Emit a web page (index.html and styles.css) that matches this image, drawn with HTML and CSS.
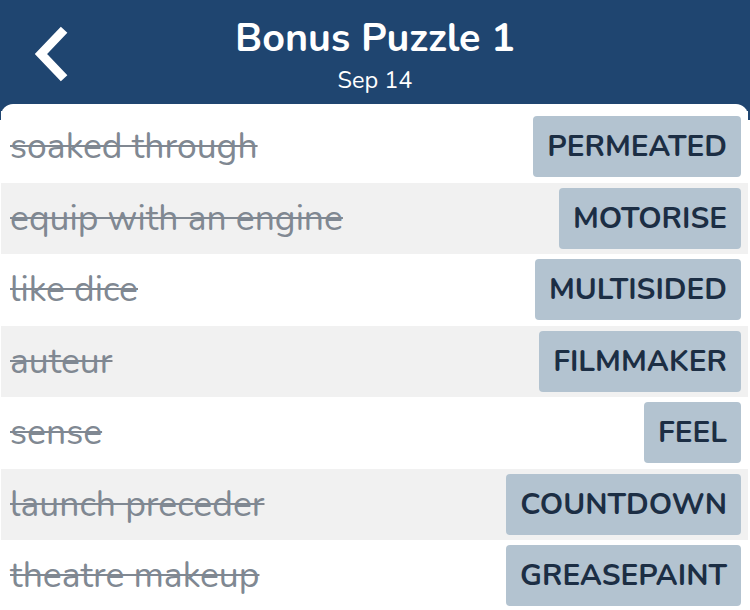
FILE: index.html
```html
<!DOCTYPE html>
<html>
<head>
<meta charset="utf-8">
<link rel="stylesheet" href="styles.css">
</head>
<body>
<div class="page">
  <header class="header">
    <a class="back" aria-label="Back">
      <svg width="40" height="56" viewBox="0 0 40 56"><path d="M29 7 L9 28 L29 49" fill="none" stroke="#fff" stroke-width="9" stroke-linecap="square" stroke-linejoin="miter"/></svg>
    </a>
    <div class="titles">
      <div class="title">Bonus Puzzle 1</div>
      <div class="subtitle">Sep 14</div>
    </div>
  </header>
  <main class="card">
    <div class="row"><span class="clue">soaked through</span><span class="answer">PERMEATED</span></div>
    <div class="row alt"><span class="clue">equip with an engine</span><span class="answer">MOTORISE</span></div>
    <div class="row"><span class="clue">like dice</span><span class="answer">MULTISIDED</span></div>
    <div class="row alt"><span class="clue">auteur</span><span class="answer">FILMMAKER</span></div>
    <div class="row"><span class="clue">sense</span><span class="answer">FEEL</span></div>
    <div class="row alt"><span class="clue">launch preceder</span><span class="answer">COUNTDOWN</span></div>
    <div class="row"><span class="clue">theatre makeup</span><span class="answer">GREASEPAINT</span></div>
  </main>
</div>
</body>
</html>
```
FILE: styles.css
```css
html, body {
  margin: 0;
  padding: 0;
  background: #fff;
  font-family: "Nunito", "Lato", "Open Sans", sans-serif;
}
.page {
  width: 750px;
  height: 610px;
  overflow: hidden;
  background: linear-gradient(#1f4570 0, #1f4570 120px, #fff 120px);
}
.header {
  height: 104px;
  box-sizing: border-box;
  padding-top: 16px;
  position: relative;
  color: #fff;
}
.back {
  position: absolute;
  left: 32px;
  top: 26px;
  display: block;
  line-height: 0;
}
.titles {
  display: flex;
  flex-direction: column;
  align-items: center;
}
.title {
  font-size: 39.5px;
  font-weight: 700;
  line-height: 44px;
}
.subtitle {
  font-size: 23.5px;
  line-height: 28px;
  margin-top: 6px;
}
.card {
  width: 747px;
  margin-left: 1px;
  background: #fff;
  border-radius: 12px 12px 0 0;
  padding-top: 7px;
}
.row {
  height: 71.5px;
  display: flex;
  align-items: center;
  justify-content: space-between;
  padding: 0 7px 0 9px;
  box-sizing: border-box;
  background: #fff;
}
.row.alt {
  background: #f1f1f1;
}
.clue {
  font-size: 35.5px;
  color: #808892;
  text-decoration: line-through;
  text-decoration-thickness: 2px;
  white-space: nowrap;
}
.answer {
  height: 61px;
  display: flex;
  align-items: center;
  padding: 0 14px;
  background: #b3c3d0;
  border-radius: 4px;
  color: #1c2e44;
  font-size: 29.8px;
  font-weight: 700;
  letter-spacing: 0;
}
```
